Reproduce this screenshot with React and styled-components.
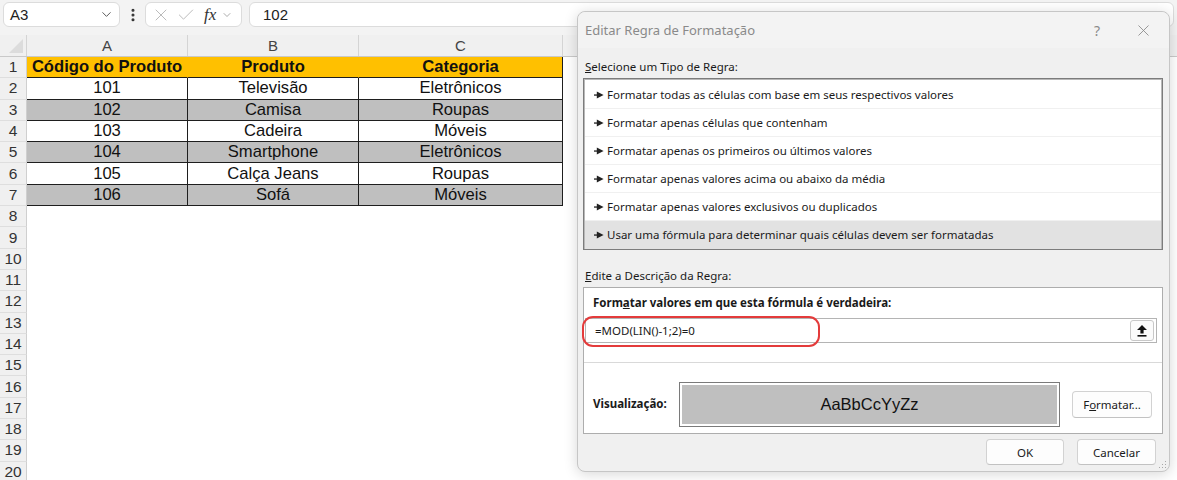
import React from 'react';
import styled, { createGlobalStyle } from 'styled-components';
import { X, Check, ChevronDown, EllipsisVertical } from 'lucide-react';

const GlobalStyle = createGlobalStyle`
  html, body { margin: 0; padding: 0; background: #fff; }
  body { font-family: "Liberation Sans", Arial, sans-serif; }
  * { box-sizing: border-box; }
`;

const ui = `"Noto Sans", "Open Sans", sans-serif`;
const cellFont = `"Liberation Sans", Arial, sans-serif`;

const rows = [
    { code: '101', product: 'Televisão', category: 'Eletrônicos' },
    { code: '102', product: 'Camisa', category: 'Roupas' },
    { code: '103', product: 'Cadeira', category: 'Móveis' },
    { code: '104', product: 'Smartphone', category: 'Eletrônicos' },
    { code: '105', product: 'Calça Jeans', category: 'Roupas' },
    { code: '106', product: 'Sofá', category: 'Móveis' },
];

const ruleTypes = [
    'Formatar todas as células com base em seus respectivos valores',
    'Formatar apenas células que contenham',
    'Formatar apenas os primeiros ou últimos valores',
    'Formatar apenas valores acima ou abaixo da média',
    'Formatar apenas valores exclusivos ou duplicados',
    'Usar uma fórmula para determinar quais células devem ser formatadas',
];

const COLS = [161, 171, 204];

const Pointer = () => (
    <svg width="10" height="8" viewBox="0 0 10 8">
        <rect x="0" y="3.4" width="4" height="1.3" fill="#222" />
        <path d="M2.8 0.6 L9.6 4 L2.8 7.4 Z" fill="#222" />
    </svg>
);

const UploadIcon = () => (
    <svg width="12" height="13" viewBox="0 0 12 13">
        <path d="M6 1 L11 6 L7.6 6 L7.6 9.5 L4.4 9.5 L4.4 6 L1 6 Z" fill="#111" />
        <rect x="1.5" y="11" width="9" height="1.6" fill="#111" />
    </svg>
);

const App = () => {
    return <Screen>
        <GlobalStyle />
        <FormulaBar>
            <NameBox>
                <span>A3</span>
                <ChevronDown size={15} strokeWidth={1.4} color="#444" />
            </NameBox>
            <Dots><EllipsisVertical size={16} strokeWidth={2.6} color="#333" /></Dots>
            <FxGroup>
                <X size={20} strokeWidth={1.1} color="#b5b5b5" />
                <Check size={20} strokeWidth={1.1} color="#b5b5b5" />
                <Fx>fx</Fx>
                <ChevronDown size={12} strokeWidth={1.4} color="#888" />
            </FxGroup>
            <FormulaInput>102</FormulaInput>
        </FormulaBar>

        <HeaderRow>
            <Corner><CornerTriangle /></Corner>
            {['A', 'B', 'C'].map((l, i) => <ColHead key={l} $w={COLS[i]}>{l}</ColHead>)}
            <ColHead $w={300} />
        </HeaderRow>

        <Row>
            <RowHead>1</RowHead>
            <Cell $w={COLS[0]} $head>Código do Produto</Cell>
            <Cell $w={COLS[1]} $head>Produto</Cell>
            <Cell $w={COLS[2]} $head>Categoria</Cell>
        </Row>
        {rows.map((r, i) => (
            <Row key={r.code}>
                <RowHead>{i + 2}</RowHead>
                <Cell $w={COLS[0]} $shade={i % 2 === 1}>{r.code}</Cell>
                <Cell $w={COLS[1]} $shade={i % 2 === 1}>{r.product}</Cell>
                <Cell $w={COLS[2]} $shade={i % 2 === 1}>{r.category}</Cell>
            </Row>
        ))}
        {Array.from({ length: 13 }, (_, i) => (
            <Row key={i}>
                <RowHead>{i + 8}</RowHead>
            </Row>
        ))}

        <Dialog>
            <TitleBar>
                <Title>Editar Regra de Formatação</Title>
                <TitleControls>
                    <Help>?</Help>
                    <X size={19} strokeWidth={1.1} color="#8a8a8a" />
                </TitleControls>
            </TitleBar>
            <Body>
                <Label><u>S</u>elecione um Tipo de Regra:</Label>
                <RuleList>
                    {ruleTypes.map((t, i) => (
                        <RuleItem key={t} $selected={i === ruleTypes.length - 1}>
                            <Pointer />
                            <span>{t}</span>
                        </RuleItem>
                    ))}
                </RuleList>
                <Label $gap><u>E</u>dite a Descrição da Regra:</Label>
                <DescBox>
                    <DescTop>
                        <BoldLabel>Form<u>a</u>tar valores em que esta fórmula é verdadeira:</BoldLabel>
                        <FormulaField>
                            <span>=MOD(LIN()-1;2)=0</span>
                            <UploadButton><UploadIcon /></UploadButton>
                            <Highlight />
                        </FormulaField>
                    </DescTop>
                    <DescBottom>
                        <BoldLabel>Visualização:</BoldLabel>
                        <Preview>AaBbCcYyZz</Preview>
                        <Button $w={80} $h={27}>F<u>o</u>rmatar...</Button>
                    </DescBottom>
                </DescBox>
                <Footer>
                    <Button $w={78} $h={26}>OK</Button>
                    <Button $w={79} $h={26}>Cancelar</Button>
                </Footer>
            </Body>
            <Grip />
        </Dialog>
    </Screen>
}

const Screen = styled.div`
    position: relative;
    width: 1177px;
    height: 480px;
    overflow: hidden;
    background: #fff;
`

const FormulaBar = styled.div`
    display: flex;
    align-items: flex-start;
    height: 35px;
    padding: 2px 0 0 3px;
    background: #f3f3f3;
`

const NameBox = styled.div`
    width: 117px;
    height: 25px;
    display: flex;
    align-items: center;
    justify-content: space-between;
    padding: 0 5px 0 6px;
    background: #fff;
    border: 1px solid #dcdcdc;
    border-radius: 6px;
    font: 15px ${cellFont};
    color: #222;
`

const Dots = styled.div`
    width: 25px;
    height: 25px;
    display: flex;
    align-items: center;
    justify-content: center;
`

const FxGroup = styled.div`
    width: 97px;
    height: 25px;
    display: flex;
    align-items: center;
    gap: 5px;
    padding: 0 4px 0 5px;
    background: #fff;
    border: 1px solid #dcdcdc;
    border-radius: 6px;
`

const Fx = styled.span`
    font: italic 17px "Liberation Serif", serif;
    color: #333;
    margin-left: 3px;
`

const FormulaInput = styled.div`
    flex: 1;
    height: 25px;
    margin-left: 7px;
    margin-right: 3px;
    display: flex;
    align-items: center;
    padding-left: 13px;
    background: #fff;
    border: 1px solid #dcdcdc;
    border-radius: 6px;
    font: 15px ${cellFont};
    color: #222;
`

const HeaderRow = styled.div`
    display: flex;
    height: 22px;
    background: #f0f0f0;
    border-bottom: 1px solid #c9c9c9;
`

const Corner = styled.div`
    width: 27px;
    display: flex;
    align-items: flex-end;
    justify-content: flex-end;
    padding: 0 3px 3px 0;
    border-right: 1px solid #d4d4d4;
`

const CornerTriangle = styled.div`
    width: 0;
    height: 0;
    border-left: 14px solid transparent;
    border-bottom: 14px solid #dcdcdc;
`

const ColHead = styled.div`
    width: ${p => p.$w}px;
    display: flex;
    align-items: center;
    justify-content: center;
    border-right: 1px solid #d4d4d4;
    font: 15px ${cellFont};
    color: #444;
`

const Row = styled.div`
    display: flex;
    height: 21.3px;
`

const RowHead = styled.div`
    width: 27px;
    flex-shrink: 0;
    display: flex;
    align-items: center;
    justify-content: center;
    background: #f0f0f0;
    border-right: 1px solid #cfcfcf;
    border-bottom: 1px solid #dedede;
    font: 15.5px ${cellFont};
    color: #333;
`

const Cell = styled.div`
    width: ${p => p.$w}px;
    display: flex;
    align-items: center;
    justify-content: center;
    background: ${p => p.$head ? '#ffc000' : p.$shade ? '#bfbfbf' : '#fff'};
    border-bottom: 1px solid #1e1e1e;
    border-right: 1px solid ${p => p.$head ? '#ffc000' : '#1e1e1e'};
    &:last-child { border-right-color: #1e1e1e; }
    font: ${p => p.$head ? 'bold' : 'normal'} 16.6px ${cellFont};
    color: #111;
    white-space: nowrap;
`

const Dialog = styled.div`
    position: absolute;
    left: 577px;
    top: 11px;
    width: 593px;
    height: 461px;
    display: flex;
    flex-direction: column;
    background: #f0f0f0;
    border: 1px solid #c6c6c6;
    border-radius: 8px;
    box-shadow: 0 2px 14px rgba(0, 0, 0, 0.16);
    font-family: ${ui};
    color: #1a1a1a;
`

const TitleBar = styled.div`
    height: 36px;
    display: flex;
    align-items: center;
    justify-content: space-between;
    padding: 0 16px 0 7px;
    background: #f3f3f3;
    border-radius: 8px 8px 0 0;
`

const Title = styled.div`
    font-size: 13px;
    color: #8a8a8a;
`

const TitleControls = styled.div`
    display: flex;
    align-items: center;
    gap: 34px;
`

const Help = styled.span`
    font-size: 14px;
    color: #8a8a8a;
`

const Body = styled.div`
    flex: 1;
    display: flex;
    flex-direction: column;
    padding: 11px 6px 0 5px;
`

const Label = styled.div`
    height: 16px;
    line-height: 16px;
    font-size: 11.5px;
    padding-left: 2px;
    margin-top: ${p => p.$gap ? '18px' : '0'};
    margin-bottom: 3px;
`

const RuleList = styled.div`
    height: 172px;
    padding-top: 2px;
    background: #fff;
    border: 1px solid #7c7c7c;
    box-shadow: inset 0 0 0 1px #b8b8b8;
    overflow: hidden;
`

const RuleItem = styled.div`
    height: 28px;
    display: flex;
    align-items: center;
    gap: 3px;
    padding-left: 9px;
    margin: 0 1px;
    font-size: 11.5px;
    background: ${p => p.$selected ? '#e2e2e2' : '#fff'};
    border-bottom: 1px solid ${p => p.$selected ? '#e2e2e2' : '#f0f0f0'};
`

const DescBox = styled.div`
    height: 147px;
    display: flex;
    flex-direction: column;
    background: #fff;
    border: 1px solid #adadad;
`

const DescTop = styled.div`
    height: 75px;
    padding: 7px 5px 0 1px;
    border-bottom: 1px solid #d9d9d9;
`

const BoldLabel = styled.div`
    font-size: 11.5px;
    font-weight: bold;
    line-height: 16px;
    padding-left: 8px;
    white-space: nowrap;
`

const FormulaField = styled.div`
    position: relative;
    height: 25px;
    margin-top: 7px;
    display: flex;
    align-items: center;
    justify-content: space-between;
    padding: 0 2px 0 9px;
    border: 1px solid #b4b4b4;
    font-size: 11.5px;
`

const UploadButton = styled.div`
    width: 24px;
    height: 21px;
    display: flex;
    align-items: center;
    justify-content: center;
    background: #fbfbfb;
    border: 1px solid #c8c8c8;
    border-radius: 3px;
`

const Highlight = styled.div`
    position: absolute;
    left: -4px;
    top: -3px;
    width: 238px;
    height: 31px;
    border: 2px solid #e43b3b;
    border-radius: 11px;
`

const DescBottom = styled.div`
    flex: 1;
    display: flex;
    align-items: center;
    padding: 12px 0 0 1px;
    ${BoldLabel} { width: 94px; }
`

const Preview = styled.div`
    width: 381px;
    height: 45px;
    display: flex;
    align-items: center;
    justify-content: center;
    margin-right: 12px;
    background: #bfbfbf;
    border: 1px solid #7a7a7a;
    box-shadow: inset 0 0 0 2px #fff;
    font: 16.5px ${cellFont};
    color: #111;
`

const Button = styled.div`
    width: ${p => p.$w}px;
    height: ${p => p.$h}px;
    display: flex;
    align-items: center;
    justify-content: center;
    background: #fdfdfd;
    border: 1px solid #d2d2d2;
    border-bottom-color: #c2c2c2;
    border-radius: 4px;
    font-size: 11.5px;
    color: #1a1a1a;
`

const Footer = styled.div`
    display: flex;
    justify-content: flex-end;
    gap: 13px;
    padding: 5px 7px 0 0;
`

const Grip = styled.div`
    position: absolute;
    right: 3px;
    bottom: 3px;
    width: 8px;
    height: 8px;
    background-image: radial-gradient(circle, #a8a8a8 0.8px, transparent 1px);
    background-size: 3px 3px;
    clip-path: polygon(100% 0, 100% 100%, 0 100%);
`

export default App;
